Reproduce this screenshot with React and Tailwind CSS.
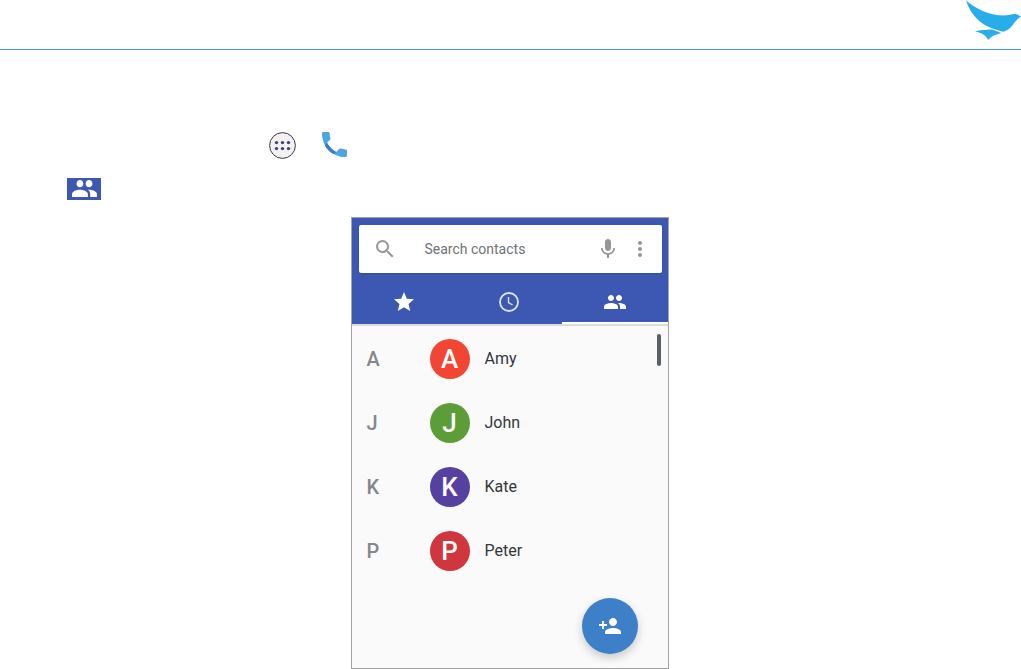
import {
  MdMic,
  MdMoreVert,
  MdPeople,
  MdPersonAdd,
  MdSearch,
  MdStar,
} from "react-icons/md";

const CONTACTS = [
  { name: "Amy", color: "bg-[#f24533]" },
  { name: "John", color: "bg-[#5d9d38]" },
  { name: "Kate", color: "bg-[#5640a0]" },
  { name: "Peter", color: "bg-[#cf363d]" },
];

function BirdLogo() {
  return (
    <svg viewBox="48 0 165 120" className="h-10 w-[55px]" fill="#27aeea" aria-hidden="true">
      <path d="M48 0 C58 12 78 23 96 32 C120 42 147 48 171 46 C180 45 185 42 193 42 C201 42 207 45 213 50 C205 54 200 59 194 67 C186 80 176 91 160 95 C140 91 111 82 88 63 C66 44 54 21 48 0Z" />
      <path d="M75 94 C94 91 112 88 129 89 L154 99 C137 103 124 109 114 120 C111 112 107 108 101 104 C94 99 85 97 75 94Z" />
    </svg>
  );
}

function AppsIcon() {
  return (
    <svg viewBox="0 0 27 27" className="size-[27px]" aria-hidden="true">
      <circle cx="13.5" cy="13.5" r="12.9" fill="#f2f0f1" stroke="#3c3638" strokeWidth="1" />
      {[10.6, 16.6].map((y) =>
        [7.5, 13.5, 19.5].map((x) => (
          <circle key={`${x}-${y}`} cx={x} cy={y} r="1.7" fill="#3f4470" />
        ))
      )}
    </svg>
  );
}

function PhoneIcon() {
  return (
    <svg viewBox="3 3 18 18" className="size-[25px]" aria-hidden="true">
      <path d="M6.620 10.790c1.440 2.830 3.760 5.140 6.590 6.590l2.200-2.200c.270-.270.670-.360 1.020-.240 1.120.370 2.330.570 3.570.570.550 0 1 .450 1 1V20c0 .550-.450 1-1 1-9.390 0-17-7.610-17-17 0-.550.450-1 1-1h3.500c.550 0 1 .450 1 1 0 1.250.200 2.450.570 3.570.110.350.030.740-.250 1.020l-2.200 2.200z" fill="#4ba5e2" />
      <path d="M6.620 10.790c1.440 2.830 3.760 5.140 6.590 6.590l-1.900 1.600c-2.600-1.400-4.800-3.600-6.300-6.300z" fill="#3580c8" />
    </svg>
  );
}

function ClockIcon() {
  return (
    <svg viewBox="0 0 24 24" className="size-6" fill="none" stroke="#dfe4f6" aria-hidden="true">
      <circle cx="12" cy="12" r="9" strokeWidth="1.8" />
      <path d="M11.500 7 V12.500 L15.500 15" strokeWidth="1.4" />
    </svg>
  );
}

export default function App() {
  return (
    <div className="min-h-screen w-full bg-white font-['Roboto',sans-serif]">
      <header className="flex h-[50px] items-start justify-end border-b border-[#3a9fd6]">
        <BirdLogo />
      </header>

      <main className="pr-0.5">
        <div className="flex items-start gap-[26px] pt-[82px] pl-[269px]">
          <AppsIcon />
          <PhoneIcon />
        </div>
        <div className="pt-[19px] pl-[67px]">
          <div className="flex h-[22px] w-[34px] items-start justify-center bg-[#3c58b2] pt-0.5 text-white">
            <svg viewBox="1 5 22 14" className="h-[17px] w-[25px]" preserveAspectRatio="none" fill="currentColor" aria-hidden="true">
              <path d="M16 11c1.660 0 3-1.340 3-3s-1.340-3-3-3-3 1.340-3 3 1.340 3 3 3zm-8 0c1.660 0 3-1.340 3-3S9.660 5 8 5 5 6.340 5 8s1.340 3 3 3zm0 2c-2.330 0-7 1.170-7 3.500V19h14v-2.500c0-2.330-4.670-3.500-7-3.500zm8 0c-.290 0-.620.020-.970.050 1.160.840 1.970 1.970 1.970 3.450V19h6v-2.500c0-2.330-4.670-3.500-7-3.500z" />
            </svg>
          </div>
        </div>

        {/* Phone screen */}
        <section className="relative mx-auto mt-[17px] w-[318px] border border-[#a3a3a5] bg-[#fafafa]">
          <div className="bg-[#3c58b2] pt-[7px]">
            <div className="mx-[7px] mr-[6px] flex h-12 items-center rounded-xs bg-white pr-[10px] pl-[14px] text-[#949698] shadow-sm">
              <MdSearch className="size-6 shrink-0" />
              <input
                type="text"
                aria-label="Search contacts"
                placeholder="Search contacts"
                className="ml-7 min-w-0 flex-1 text-sm text-gray-700 outline-none placeholder:text-[#6f7276]"
              />
              <button aria-label="Voice search">
                <MdMic className="size-6" />
              </button>
              <button aria-label="More options" className="ml-2">
                <MdMoreVert className="size-6" />
              </button>
            </div>

            <nav className="grid grid-cols-3 text-white">
              <button aria-label="Favorites" className="flex h-[51px] items-center justify-center border-b-2 border-transparent pt-[9px]">
                <MdStar className="size-6" />
              </button>
              <button aria-label="Recents" className="flex h-[51px] items-center justify-center border-b-2 border-transparent pt-[9px]">
                <ClockIcon />
              </button>
              <button aria-label="Contacts" className="flex h-[51px] items-center justify-center border-b-2 border-white pt-[9px]">
                <MdPeople className="size-6" />
              </button>
            </nav>
          </div>

          <ul className="border-t-2 border-[#dcdcdd] pt-px pb-[85px]">
            {CONTACTS.map((contact) => (
              <li key={contact.name} className="flex h-16 items-center pl-[15px]">
                <span className="w-[63px] text-xl font-medium text-[#85878a]">
                  {contact.name.charAt(0)}
                </span>
                <span
                  className={`flex size-10 items-center justify-center rounded-full text-[26px] font-medium text-white ${contact.color}`}
                >
                  {contact.name.charAt(0)}
                </span>
                <span className="ml-[15px] text-base text-[#33363b]">{contact.name}</span>
              </li>
            ))}
          </ul>

          {/* Scroll thumb */}
          <div className="absolute top-[116px] right-[7px] h-8 w-1 rounded-full bg-[#596067]" />

          <button
            aria-label="Add contact"
            className="absolute right-[30px] bottom-[14px] flex size-14 items-center justify-center rounded-full bg-[#3d80c8] text-white shadow-[0_4px_10px_rgba(0,0,0,0.2)]"
          >
            <MdPersonAdd className="size-6" />
          </button>
        </section>
      </main>
    </div>
  );
}
